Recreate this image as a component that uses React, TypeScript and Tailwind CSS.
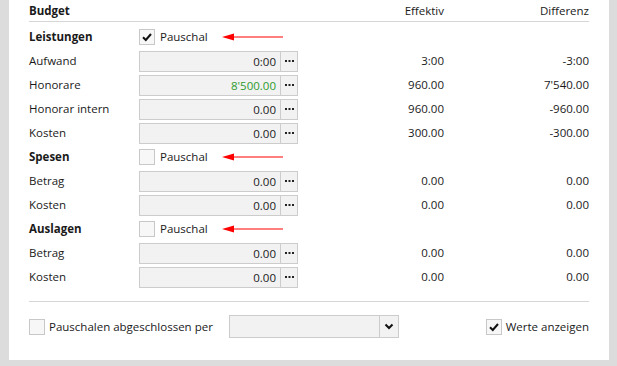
import React from "react";

const font = { fontFamily: '"Open Sans", "Noto Sans", Arial, sans-serif' };

function Check({ checked }: { checked?: boolean }) {
  return (
    <div className="w-[16px] h-[16px] border border-[#c8c8c8] bg-[#f7f7f7] flex items-center justify-center shrink-0">
      {checked && (
        <svg width="12" height="12" viewBox="0 0 12 12">
          <path d="M2 6.2 L4.8 9 L10 3" fill="none" stroke="#111" strokeWidth="2" />
        </svg>
      )}
    </div>
  );
}

function Arrow() {
  return (
    <svg width="62" height="10" viewBox="0 0 62 10">
      <line x1="8" y1="5" x2="61" y2="5" stroke="#ff0000" strokeWidth="1.2" />
      <polygon points="0,5 12,1.5 12,8.5" fill="#ff0000" />
    </svg>
  );
}

function Dots() {
  return (
    <svg width="9" height="3" viewBox="0 0 9 3">
      <rect x="0" y="0" width="2" height="2" fill="#222" />
      <rect x="3.5" y="0" width="2" height="2" fill="#222" />
      <rect x="7" y="0" width="2" height="2" fill="#222" />
    </svg>
  );
}

function SectionRow({ label, checked }: { label: string; checked?: boolean }) {
  return (
    <div className="flex items-center h-[24px]">
      <div className="w-[110px] font-bold">{label}</div>
      <Check checked={checked} />
      <span className="ml-[5px] w-[62px]">Pauschal</span>
      <Arrow />
    </div>
  );
}

function ValueRow({
  label,
  value,
  eff,
  diff,
  green,
}: {
  label: string;
  value: string;
  eff: string;
  diff: string;
  green?: boolean;
}) {
  return (
    <div className="flex items-center h-[24px]">
      <div className="w-[110px]">{label}</div>
      <div className="w-[159px] h-[21px] border border-[#cccccc] bg-[#f2f2f2] flex">
        <div
          className={
            "flex-1 text-right pr-[4px] leading-[19px] " +
            (green ? "text-[#2e9a2e]" : "text-[#1a1a1a]")
          }
        >
          {value}
        </div>
        <div className="w-[17px] border-l border-[#cccccc] flex items-center justify-center">
          <Dots />
        </div>
      </div>
      <div className="w-[146px] text-right">{eff}</div>
      <div className="w-[145px] text-right">{diff}</div>
    </div>
  );
}

export default function App() {
  return (
    <div className="w-[617px] h-[366px] bg-[#dcdcdc] pl-[9px] pr-[8px] pb-[6px]" style={font}>
      <div className="w-full h-full bg-white pl-[20px] pr-[20px] text-[11.5px] text-[#1a1a1a]">
        <div className="flex items-end h-[22px] border-b border-[#d6d6d6] pb-[2px]">
          <div className="font-bold w-[269px]">Budget</div>
          <div className="w-[146px] text-right">Effektiv</div>
          <div className="w-[145px] text-right">Differenz</div>
        </div>
        <div className="pt-[3px]">
          <SectionRow label="Leistungen" checked />
          <ValueRow label="Aufwand" value="0:00" eff="3:00" diff="-3:00" />
          <ValueRow label="Honorare" value="8'500.00" eff="960.00" diff="7'540.00" green />
          <ValueRow label="Honorar intern" value="0.00" eff="960.00" diff="-960.00" />
          <ValueRow label="Kosten" value="0.00" eff="300.00" diff="-300.00" />
          <SectionRow label="Spesen" />
          <ValueRow label="Betrag" value="0.00" eff="0.00" diff="0.00" />
          <ValueRow label="Kosten" value="0.00" eff="0.00" diff="0.00" />
          <SectionRow label="Auslagen" />
          <ValueRow label="Betrag" value="0.00" eff="0.00" diff="0.00" />
          <ValueRow label="Kosten" value="0.00" eff="0.00" diff="0.00" />
        </div>
        <div className="mt-[12px] border-t border-[#d6d6d6] pt-[8px] flex items-center h-[33px] box-content">
          <Check />
          <span className="ml-[4px] w-[180px]">Pauschalen abgeschlossen per</span>
          <div className="w-[170px] h-[23px] border border-[#cccccc] bg-[#f2f2f2] flex justify-end">
            <div className="w-[19px] border-l border-[#cccccc] flex items-center justify-center">
              <svg width="10" height="7" viewBox="0 0 10 7">
                <path d="M1.5 1.5 L5 5 L8.5 1.5" fill="none" stroke="#111" strokeWidth="2" />
              </svg>
            </div>
          </div>
          <div className="flex-1" />
          <Check checked />
          <span className="ml-[4px]">Werte anzeigen</span>
        </div>
      </div>
    </div>
  );
}
